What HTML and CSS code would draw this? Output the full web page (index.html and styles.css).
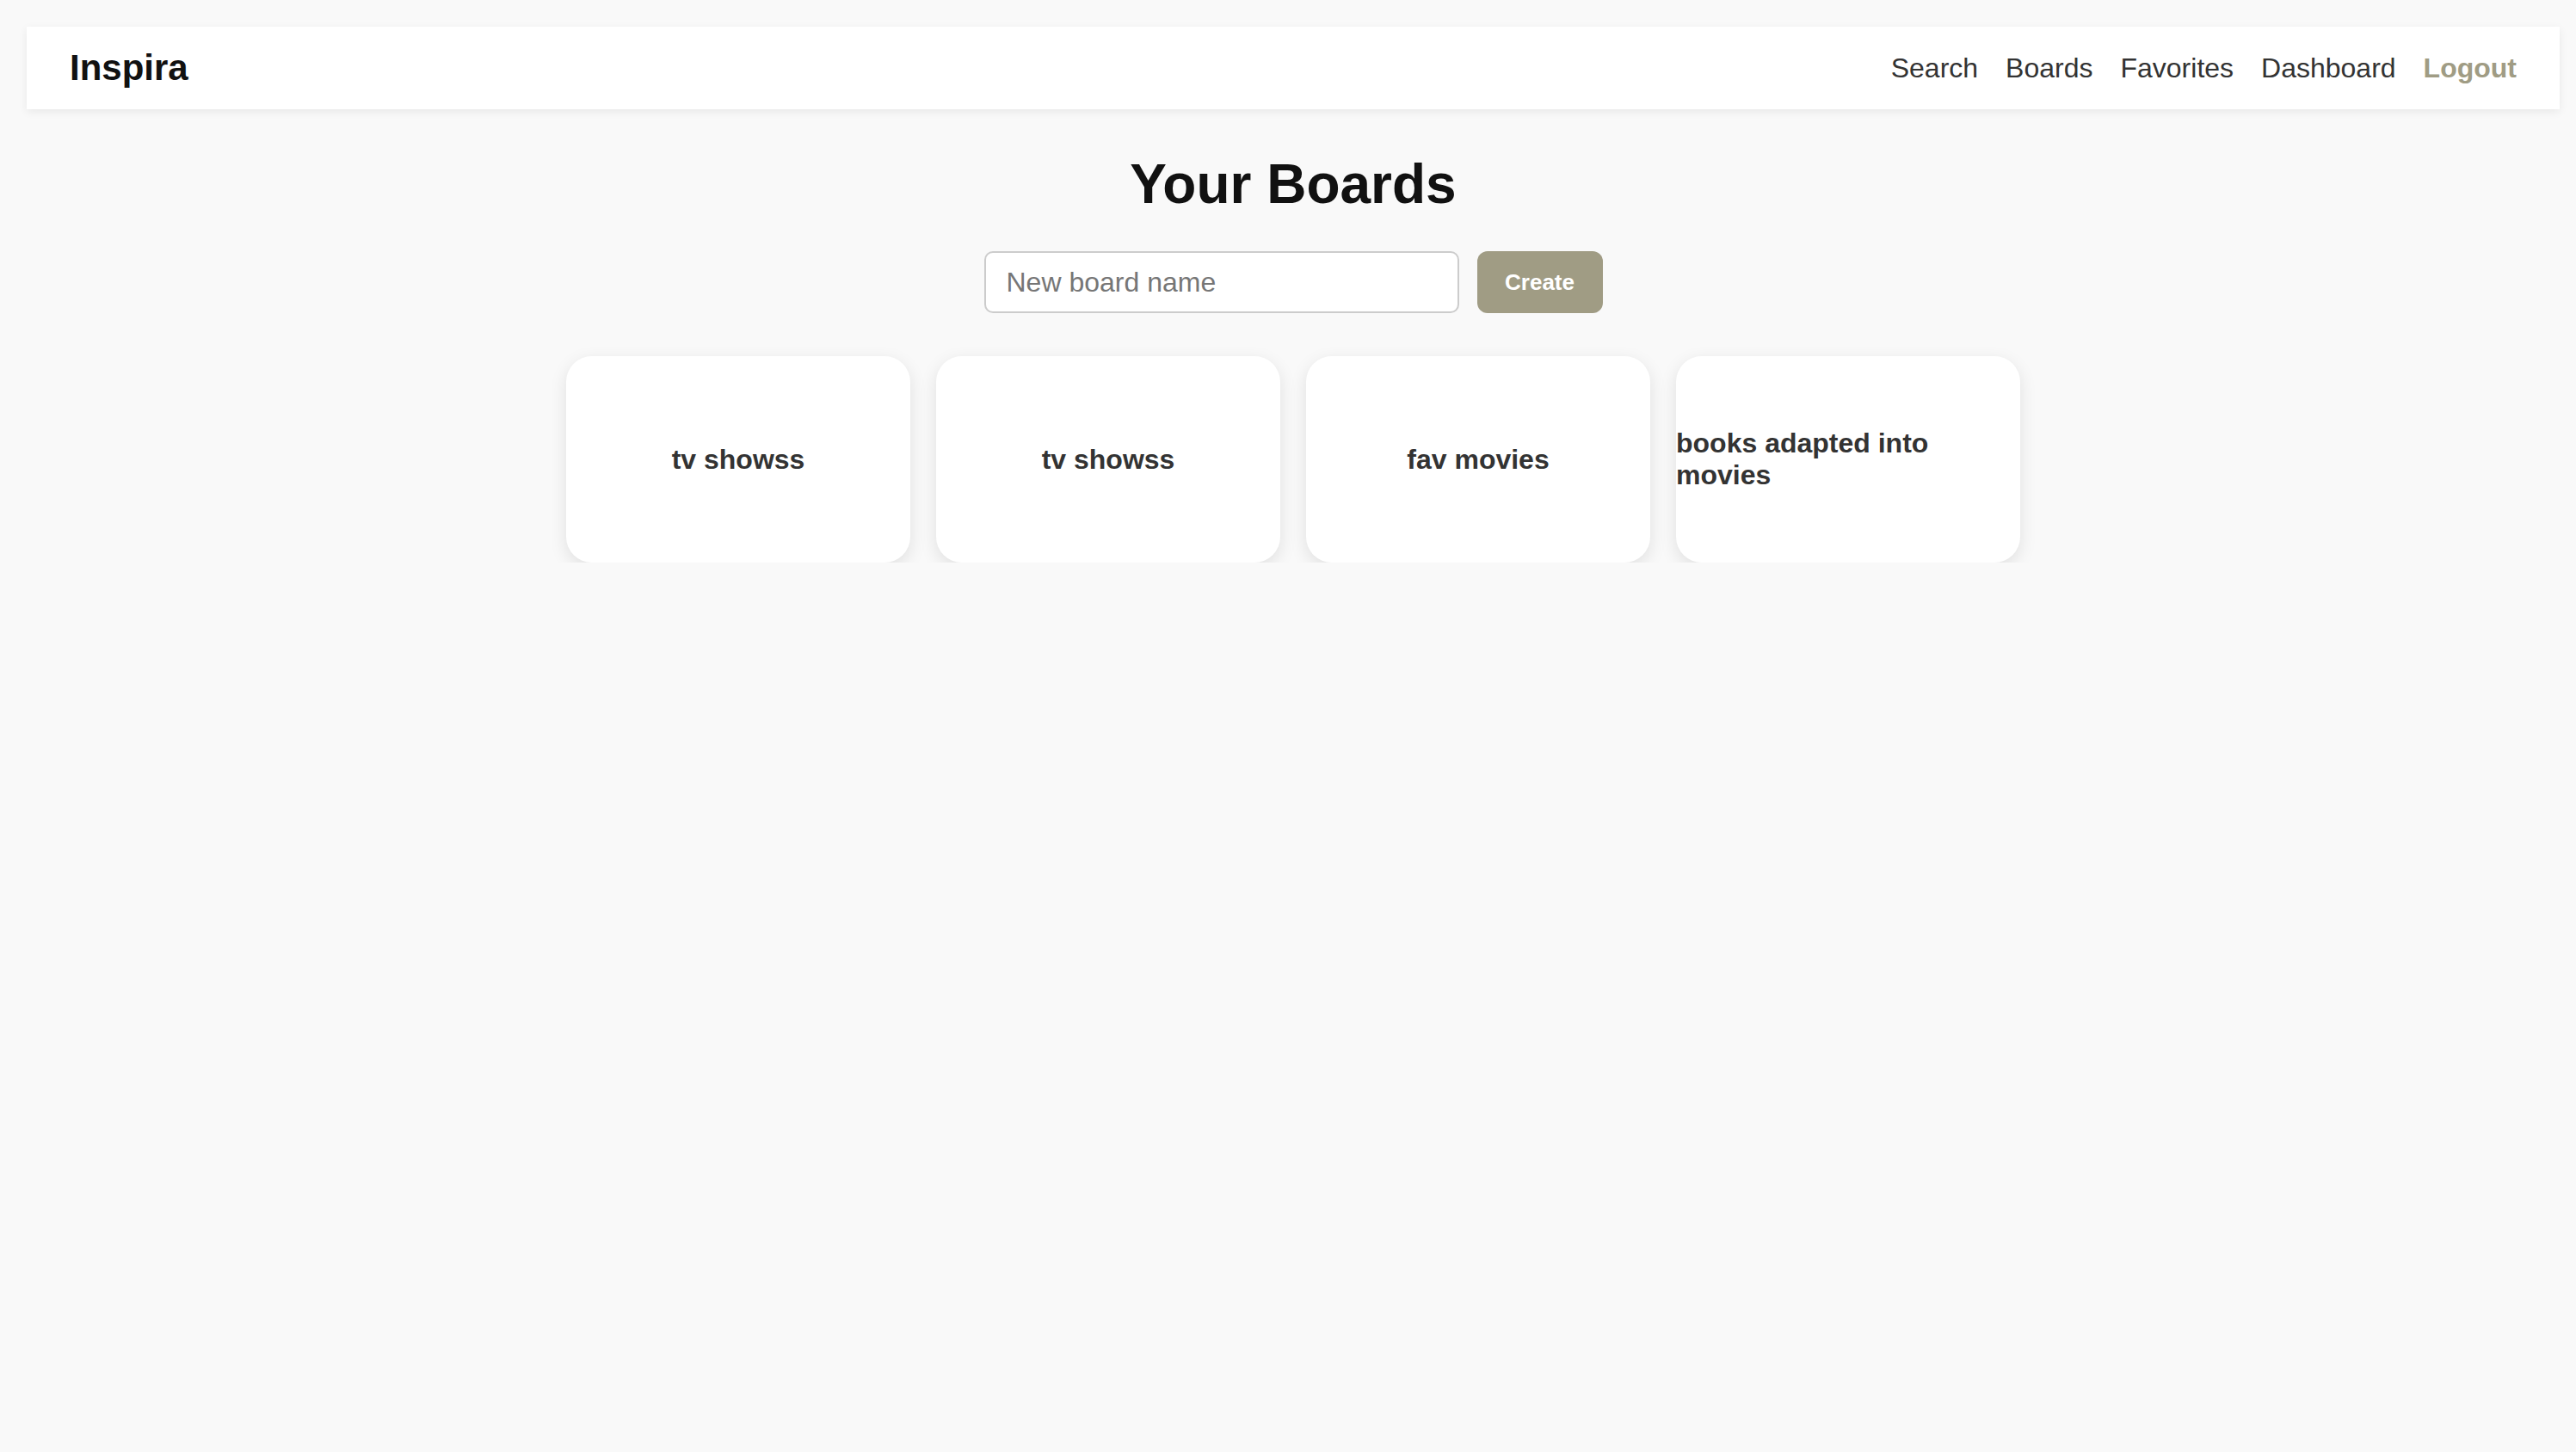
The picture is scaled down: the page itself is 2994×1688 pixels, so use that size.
FILE: index.html
```html
<!DOCTYPE html>
<html lang="en">
<head>
    <meta charset="UTF-8">
    <meta name="viewport" content="width=device-width, initial-scale=1.0">
    <title>Inspira - Your Boards</title>
    <link rel="stylesheet" href="styles.css">
</head>
<body>
    <div class="page">
        <header class="navbar">
            <div class="logo">Inspira</div>
            <nav class="nav-links">
                <a href="#">Search</a>
                <a href="#">Boards</a>
                <a href="#">Favorites</a>
                <a href="#">Dashboard</a>
                <a href="#" class="logout">Logout</a>
            </nav>
        </header>

        <main class="boards-page">
            <h1>Your Boards</h1>
            <form class="new-board" onsubmit="return false">
                <input type="text" placeholder="New board name">
                <button type="submit">Create</button>
            </form>
            <div class="board-list">
                <div class="board-card"><h3>tv showss</h3></div>
                <div class="board-card"><h3>tv showss</h3></div>
                <div class="board-card"><h3>fav movies</h3></div>
                <div class="board-card"><h3>books adapted into movies</h3></div>
            </div>
        </main>
    </div>
</body>
</html>
```

FILE: styles.css
```css
body {
    margin: 0;
    background-color: #f9f9f9;
    font-family: "Liberation Sans", Arial, sans-serif;
    color: #333;
}
.page {
    padding: 31px 19px 0 31px;
}
.navbar {
    display: flex;
    justify-content: space-between;
    align-items: center;
    height: 96px;
    padding: 0 50px;
    background-color: #fff;
    box-shadow: 0 3px 10px rgba(0, 0, 0, 0.07);
}
.logo {
    font-size: 42px;
    font-weight: bold;
    color: #111;
}
.nav-links {
    display: flex;
    gap: 32px;
}
.nav-links a {
    font-size: 32px;
    color: #333;
    text-decoration: none;
}
.nav-links a.logout {
    color: #a09c84;
    font-weight: bold;
}
.boards-page {
    text-align: center;
}
h1 {
    font-size: 64px;
    color: #111;
    margin: 50px 0 41px;
}
.new-board {
    display: flex;
    justify-content: center;
    gap: 21px;
}
.new-board input {
    box-sizing: border-box;
    width: 552px;
    height: 72px;
    padding: 0 24px;
    border: 2px solid #ccc;
    border-radius: 10px;
    font-family: inherit;
    font-size: 32px;
    color: #333;
    background: #fff;
}
.new-board input::placeholder {
    color: #767676;
}
.new-board button {
    width: 146px;
    height: 72px;
    border: none;
    border-radius: 12px;
    background-color: #a09c84;
    color: #fff;
    font-family: inherit;
    font-size: 26px;
    font-weight: bold;
    cursor: pointer;
}
.board-list {
    display: flex;
    justify-content: center;
    gap: 30px;
    margin-top: 50px;
}
.board-card {
    display: flex;
    justify-content: center;
    align-items: center;
    width: 400px;
    height: 240px;
    border-radius: 30px;
    background-color: #fff;
    box-shadow: 0 6px 20px rgba(0, 0, 0, 0.1);
    text-align: left;
}
.board-card h3 {
    margin: 0;
    font-size: 32px;
    color: #333;
}
```
